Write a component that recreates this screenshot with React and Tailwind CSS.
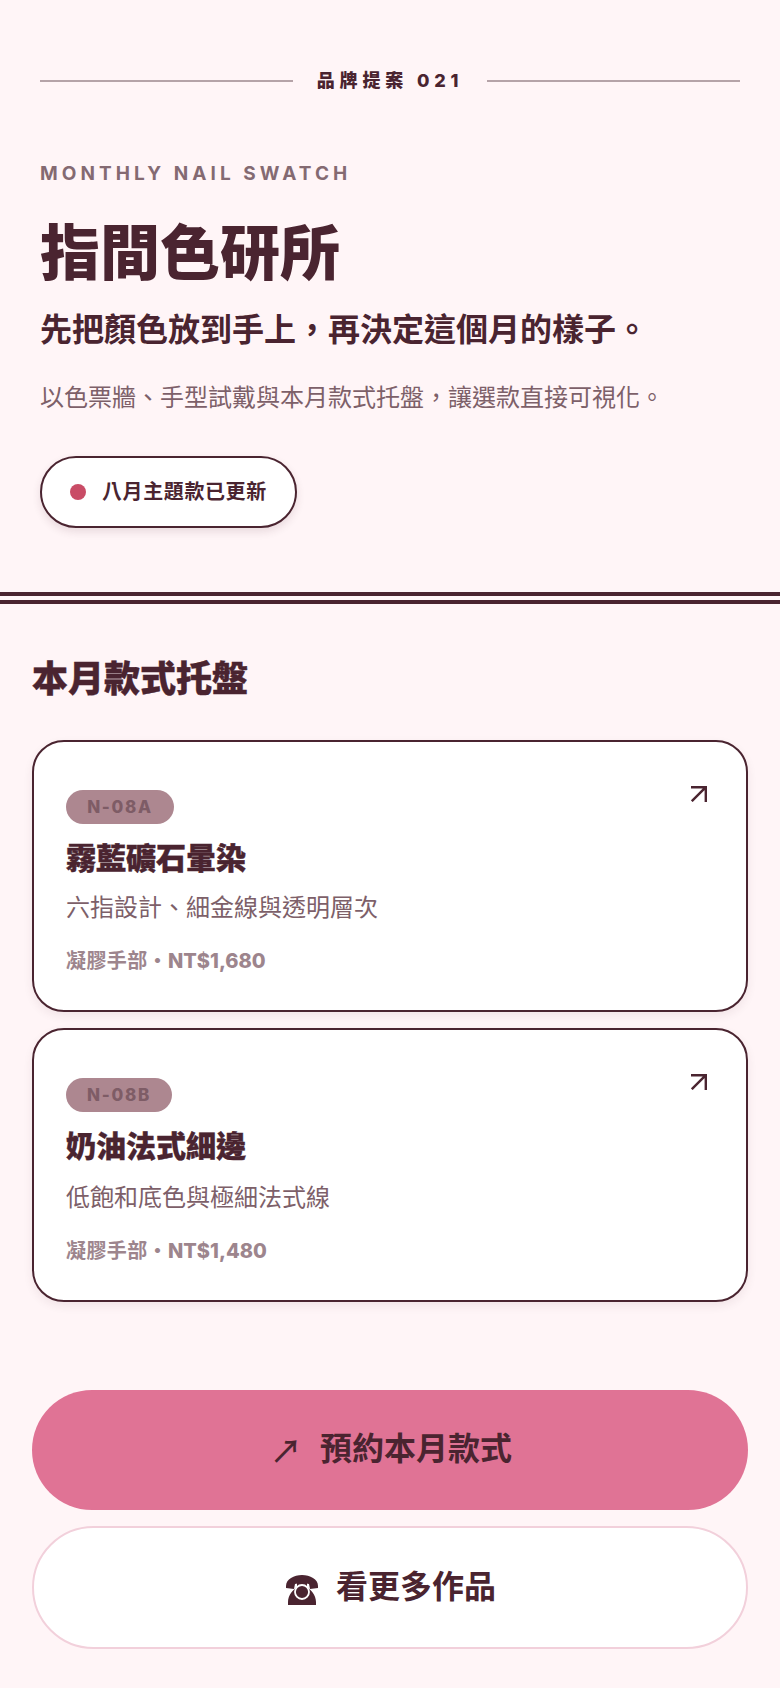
import React from 'react';

const sans = 'font-["Inter","Noto_Sans_CJK_TC","DejaVu_Sans",sans-serif]';

const items = [
  { code: 'N-08A', name: '霧藍礦石暈染', desc: '六指設計、細金線與透明層次', price: 'NT$1,680', tagWidth: 'w-[108px]', descGap: 'mt-[10px]' },
  { code: 'N-08B', name: '奶油法式細邊', desc: '低飽和底色與極細法式線', price: 'NT$1,480', tagWidth: 'w-[106px]', descGap: 'mt-[12px]' },
];

const CornerArrow = () => (
  <svg className="absolute right-[39px] top-[44px] h-4 w-4 text-[#4a2430]" viewBox="0 0 16 16" fill="none" stroke="currentColor" strokeWidth="2.4">
    <path d="M0.8 15.2 14.8 1.2M0 1.2h14.8V16" />
  </svg>
);

const PhoneIcon = () => (
  <svg className="mt-[6px] h-[30px] w-8 shrink-0 translate-x-[2px] text-[#4a2430]" viewBox="0 0 32 30" fill="currentColor">
    <path d="M0 11C0 4 8 0 16 0s16 4 16 11v2l-8 1-1-5c-3-1.500-11-1.500-14 0l-1 5-8-1Z" />
    <path d="M11 8h10v4c3.500 2.500 9 8 9 15v3H2v-3c0-7 5.500-12.500 9-15Z" />
    <circle cx="16" cy="17" r="7" stroke="#fff" strokeWidth="1.800" />
  </svg>
);

const ItemCard = ({ item }) => (
  <article className="relative rounded-[32px] border-2 border-[#4a2430] bg-white px-8 pb-[34px] pt-[48px] shadow-[0_4px_10px_rgba(74,36,48,0.08)]">
    <CornerArrow />
    <span className={`flex h-[34px] ${item.tagWidth} items-center justify-center rounded-full bg-[#ad8790] text-[17px] font-extrabold leading-none tracking-[0.1em] text-[#7e5c66]`}>
      {item.code}
    </span>
    <h3 className="mt-[12px] text-[30px] font-black leading-[44px] text-[#4a2430] [-webkit-text-stroke:0.4px_#4a2430]">{item.name}</h3>
    <p className={`${item.descGap} text-[24px] leading-[36px] text-[#7d6069]`}>{item.desc}</p>
    <p className="mt-[20px] text-[20px] leading-[30px] text-[#9d858d]">
      <span className="font-bold tracking-[0.02em]">凝膠手部・</span>
      <span className="font-extrabold">{item.price}</span>
    </p>
  </article>
);

export default function App() {
  return (
    <div className={`${sans} flex min-h-[1688px] flex-col bg-[#fff5f7] text-[#4a2430]`}>
      <header className="border-b-[12px] border-double border-[#4a2430] px-10 pb-[64px] pt-[69px]">
        <div className="flex items-center gap-6">
          <span className="h-[2px] flex-1 bg-[#b5a3a8]" />
          <span className="text-[18px] font-extrabold leading-6 tracking-[0.27em]">品牌提案 021</span>
          <span className="h-[2px] flex-1 bg-[#b5a3a8]" />
        </div>
        <p className="mt-[69px] text-[19px] font-bold leading-6 tracking-[0.214em] text-[#846a72]">MONTHLY NAIL SWATCH</p>
        <h1 className="mt-[31px] text-[60px] font-black leading-[72px]">指間色研所</h1>
        <h2 className="mt-[19px] text-[32px] font-bold leading-[44px]">先把顏色放到手上，再決定這個月的樣子。</h2>
        <p className="mt-[28px] text-[24px] leading-[36px] text-[#7d6069]">以色票牆、手型試戴與本月款式托盤，讓選款直接可視化。</p>
        <div className="mt-[40px] inline-flex h-[72px] items-center gap-4 rounded-full border-2 border-[#4a2430] bg-white px-[28px] shadow-[0_4px_8px_rgba(74,36,48,0.12)]">
          <span className="h-4 w-4 rounded-full bg-[#c94c66]" />
          <span className="text-[20px] font-bold tracking-[0.03em]">八月主題款已更新</span>
        </div>
      </header>

      <main className="flex flex-col px-8 pt-[48px]">
        <h2 className="text-[36px] font-black leading-[54px] [-webkit-text-stroke:0.4px_#4a2430]">本月款式托盤</h2>
        <div className="mt-[34px] flex flex-col gap-4">
          {items.map((item) => (
            <ItemCard key={item.code} item={item} />
          ))}
        </div>
        <div className="mt-[88px] flex flex-col gap-4">
          <button className="flex h-[120px] items-center justify-center gap-5 rounded-full bg-[#e07395] pb-[2px] text-[32px] font-semibold">
            <span className='translate-x-[2px] font-["Noto_Sans_CJK_TC",sans-serif] font-medium'>↗</span>
            <span>預約本月款式</span>
          </button>
          <button className="flex h-[123px] items-center justify-center gap-5 rounded-full border-2 border-[#f2d0db] bg-white pb-[2px] text-[32px] font-semibold">
            <PhoneIcon />
            <span>看更多作品</span>
          </button>
        </div>
      </main>
    </div>
  );
}
